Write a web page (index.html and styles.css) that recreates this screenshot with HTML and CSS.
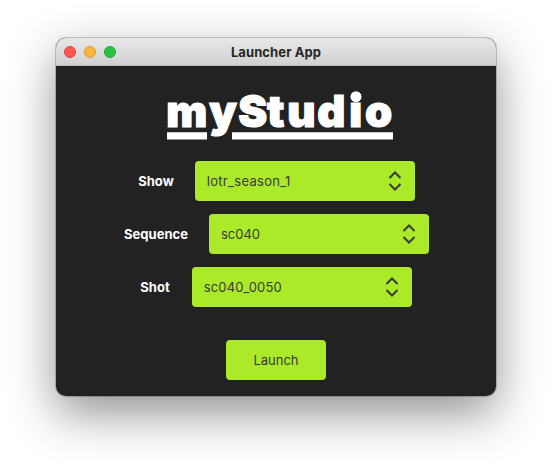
FILE: index.html
```html
<!DOCTYPE html>
<html lang="en">
<head>
<meta charset="utf-8">
<title>Launcher App</title>
<link rel="stylesheet" href="styles.css">
</head>
<body>
<main class="window">
  <header class="titlebar">
    <div class="controls"><i class="dot close"></i><i class="dot minimize"></i><i class="dot maximize"></i></div>
    <h1 class="title">Launcher App</h1>
  </header>
  <section class="content">
    <svg class="logo" width="230" height="54" viewBox="0 0 230 54">
      <text class="wordmark" y="39.2" x="1.3 44.2 73.2 102 122.2 152.3 184.3 200">myStudio</text>
      <circle class="underline" cx="191" cy="8.7" r="5.5"/>
      <path class="underline" d="M2 44.3h40v7.2H2zM67 44.3h161v7.2H67z"/>
    </svg>
    <div class="row"><span class="label">Show</span>
      <div class="select"><span class="value show">lotr_season_1</span><svg class="arrows" width="14" height="20" viewBox="0 0 14 20"><path d="M1.5 7 7 1.5 12.5 7M1.5 13 7 18.5 12.5 13"/></svg></div></div>
    <div class="row"><span class="label">Sequence</span>
      <div class="select"><span class="value">sc040</span><svg class="arrows" width="14" height="20" viewBox="0 0 14 20"><path d="M1.5 7 7 1.5 12.5 7M1.5 13 7 18.5 12.5 13"/></svg></div></div>
    <div class="row"><span class="label shot-label">Shot</span>
      <div class="select"><span class="value shot">sc040_0050</span><svg class="arrows" width="14" height="20" viewBox="0 0 14 20"><path d="M1.5 7 7 1.5 12.5 7M1.5 13 7 18.5 12.5 13"/></svg></div></div>
    <button class="launch">Launch</button>
  </section>
</main>
</body>
</html>
```
FILE: styles.css
```css
* { box-sizing: border-box; }
body {
  margin: 0;
  height: 470px;
  padding: 38px 56px;
  overflow: hidden;
  background: #fff;
  font: 13px/20px Inter, sans-serif;
}
.window {
  height: 358px;
  border-radius: 10px;
  overflow: hidden;
  background: #222;
  box-shadow: 0 0 0 1px rgba(0, 0, 0, .2), 0 17px 48px rgba(0, 0, 0, .44);
}
.titlebar {
  display: grid;
  grid-template-columns: 70px 1fr 70px;
  align-items: center;
  height: 28px;
  border-bottom: 1px solid #b5b5b5;
  background: linear-gradient(#e8e8e8, #d1d1d1);
}
.controls { display: flex; gap: 8px; padding-left: 8px; }
.dot { width: 12px; height: 12px; border-radius: 50%; border: 1px solid; }
.close { background: #ff5650; border-color: #e2443f; }
.minimize { background: #fdb43b; border-color: #dc9731; }
.maximize { background: #29c43f; border-color: #1fa632; }
.title { margin: 0; text-align: center; font-size: 13px; font-weight: 700; letter-spacing: .1px; color: #262626; }
.content { display: flex; flex-direction: column; align-items: center; }
.logo { display: block; margin: 22px 0 19px 8px; overflow: visible; }
.wordmark {
  font: 900 43.5px Inter, sans-serif;
  fill: #fff;
  stroke: #fff;
  stroke-width: 1.2px;
}
.underline { fill: #fff; }
.row { display: flex; align-items: center; gap: 21px; margin: 0 0 13px 1px; }
.label { color: #fff; font-weight: 700; }
.shot-label { margin: 0 1px 0 -1px; }
.select {
  display: flex;
  align-items: center;
  justify-content: space-between;
  width: 220px;
  height: 40px;
  padding: 0 13px 0 12px;
  border-radius: 4px;
  background: #abea28;
  color: #393939;
}
.show { letter-spacing: .3px; }
.shot { letter-spacing: .2px; }
.arrows { fill: none; stroke: #393939; stroke-width: 2; }
.launch {
  width: 100px;
  height: 40px;
  margin-top: 20px;
  padding: 0;
  border: 0;
  border-radius: 4px;
  background: #abea28;
  color: #393939;
  font: inherit;
}
```
